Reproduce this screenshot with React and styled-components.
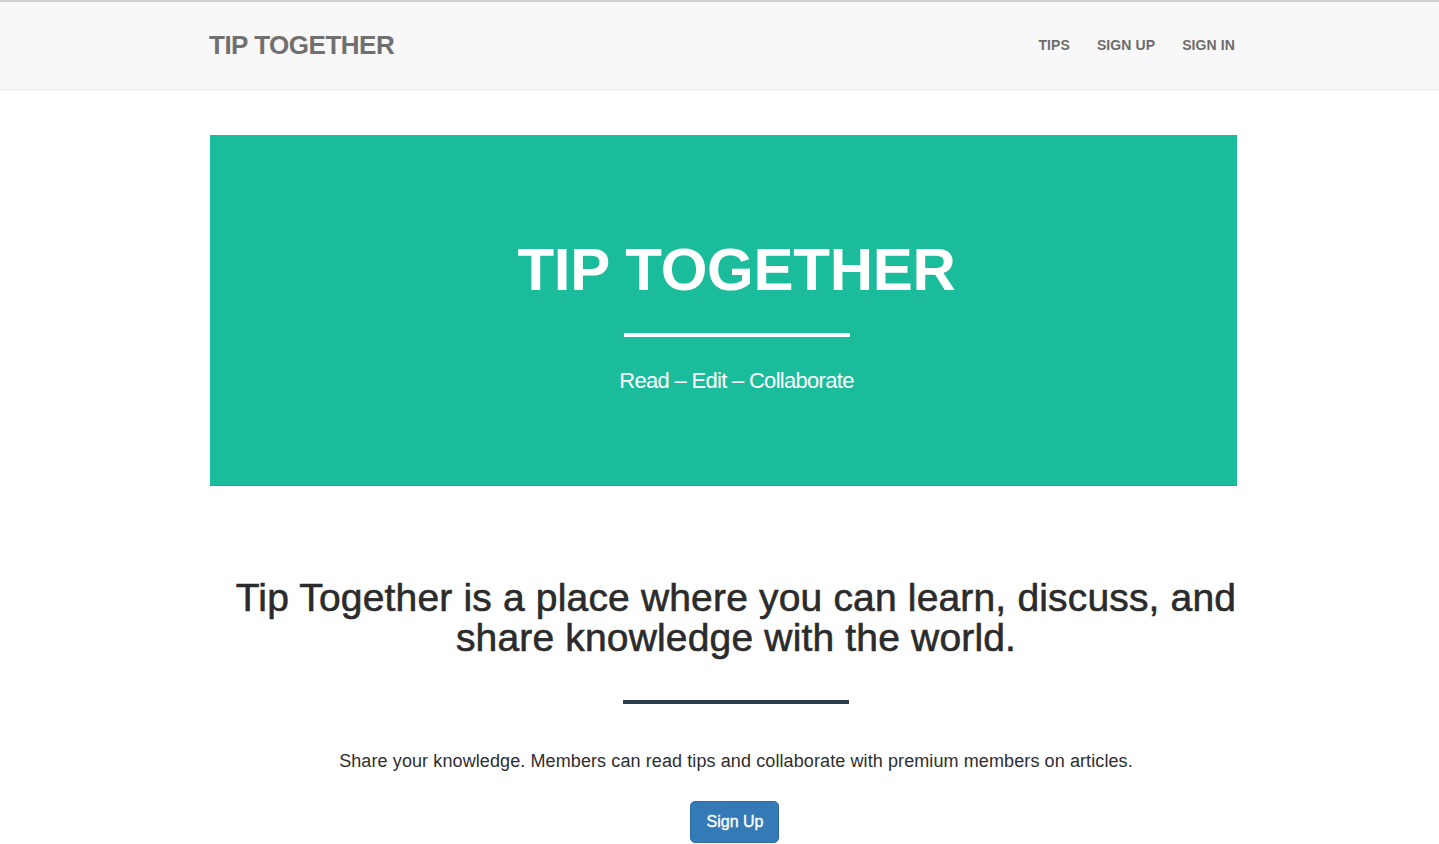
import React from "react";
import styled, { createGlobalStyle } from "styled-components";

const Global = createGlobalStyle`
  html, body { margin: 0; padding: 0; background: #ffffff; }
  body { font-family: "Liberation Sans", Arial, sans-serif; color: #333333; }
  * { box-sizing: border-box; }
`;

const Navbar = styled.header`
  background: #f8f8f8;
  border-top: 2px solid #cfcfcf;
  border-bottom: 1px solid #e7e7e7;
  height: 90px;
  display: flex;
  align-items: center;
  padding-bottom: 2px;
`;

const Container = styled.div`
  width: 1027px;
  margin-left: calc(50% - 509.5px);
`;

const NavInner = styled(Container)`
  display: flex;
  align-items: center;
  justify-content: space-between;
`;

const Brand = styled.a`
  font-size: 26px;
  font-weight: 700;
  letter-spacing: -0.5px;
  margin-left: -1px;
  color: #707070;
  text-decoration: none;
  line-height: 1;
`;

const NavLinks = styled.nav`
  display: flex;
  gap: 27px;
  margin-right: 2px;
`;

const NavLink = styled.a`
  font-size: 14px;
  font-weight: 700;
  letter-spacing: 0.1px;
  color: #6c6c6c;
  text-decoration: none;
  text-transform: uppercase;
  line-height: 1;
`;

const Hero = styled.section`
  margin-top: 45px;
  height: 351px;
  background: #1abc9c;
  box-shadow: inset 0 -1px 0 #17b190;
  padding: 105px 0 0 26px;
  display: flex;
  flex-direction: column;
  align-items: center;
  color: #ffffff;
`;

const HeroTitle = styled.h1`
  margin: 0;
  font-size: 60px;
  line-height: 60px;
  font-weight: 700;
  letter-spacing: -0.25px;
  text-transform: uppercase;
`;

const Rule = styled.hr`
  width: 226px;
  height: 4px;
  border: none;
  margin: ${(p) => p.$mt}px 0 0;
  background: ${(p) => p.$color};
`;

const HeroSub = styled.p`
  margin: 31px 0 0;
  font-size: 22px;
  line-height: 26px;
  font-weight: 400;
  letter-spacing: -0.7px;
`;

const About = styled.section`
  width: 1040px;
  margin-left: 6px;
  display: flex;
  flex-direction: column;
  align-items: center;
  text-align: center;
`;

const Heading = styled.h2`
  margin: 92px 0 0;
  font-size: 39px;
  line-height: 40px;
  font-weight: 400;
  letter-spacing: 0.17px;
  color: #2b2b2b;
  -webkit-text-stroke: 0.6px #2b2b2b;
`;

const Lead = styled.p`
  margin: 45px 0 0;
  font-size: 18px;
  line-height: 24px;
  letter-spacing: 0.1px;
  color: #2e2e2e;
`;

const Button = styled.a`
  display: inline-block;
  margin-top: 28px;
  margin-right: 3px;
  padding: 9px 15px 9px 16px;
  font-size: 16px;
  line-height: 22px;
  color: #ffffff;
  -webkit-text-stroke: 0.35px #ffffff;
  background: #337ab7;
  border: 1px solid #2e6da4;
  border-radius: 5px;
  text-decoration: none;
`;

export default function App() {
  return (
    <>
      <Global />
      <Navbar>
        <NavInner>
          <Brand href="#">TIP TOGETHER</Brand>
          <NavLinks>
            <NavLink href="#">Tips</NavLink>
            <NavLink href="#">Sign Up</NavLink>
            <NavLink href="#">Sign In</NavLink>
          </NavLinks>
        </NavInner>
      </Navbar>
      <Container>
        <Hero>
          <HeroTitle>Tip Together</HeroTitle>
          <Rule $mt={33} $color="#ffffff" />
          <HeroSub>Read – Edit – Collaborate</HeroSub>
        </Hero>
        <About>
          <Heading>
            Tip Together is a place where you can learn, discuss, and share
            knowledge with the world.
          </Heading>
          <Rule $mt={42} $color="#2c3e50" />
          <Lead>
            Share your knowledge. Members can read tips and collaborate with
            premium members on articles.
          </Lead>
          <Button href="#">Sign Up</Button>
        </About>
      </Container>
    </>
  );
}
